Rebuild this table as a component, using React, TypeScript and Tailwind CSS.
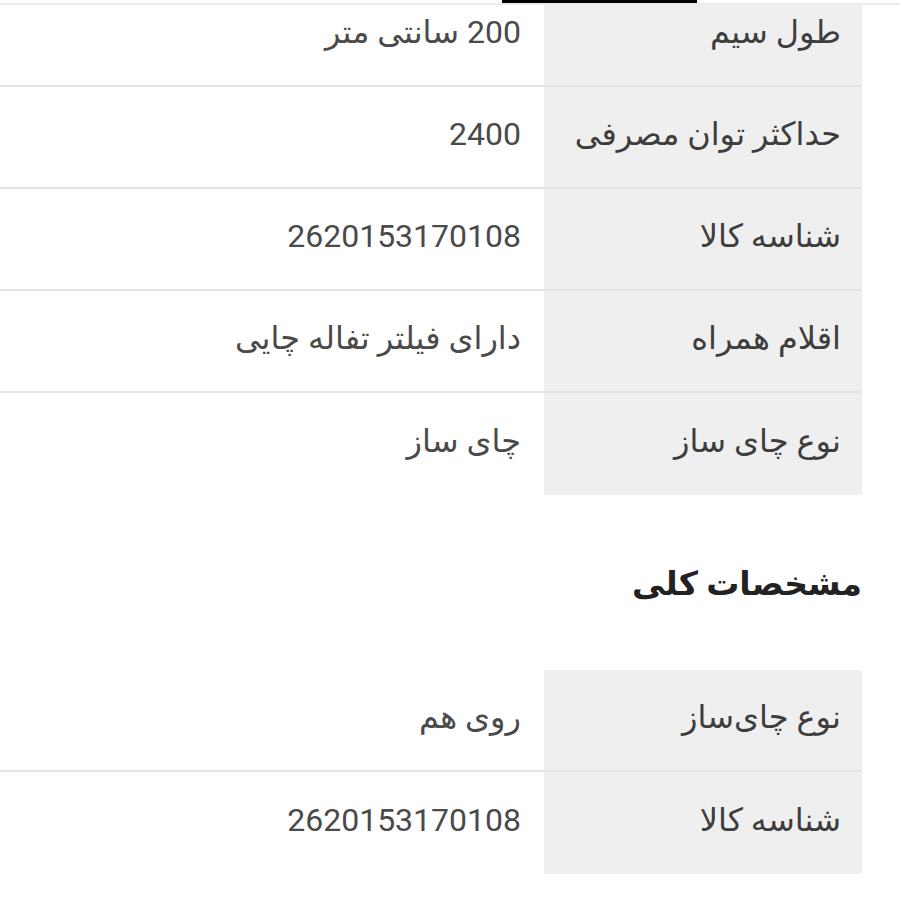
import React from 'react'

type Spec = { label: string; value: string }

const mainSpecs: Spec[] = [
  { label: 'طول سیم', value: '200 سانتی متر' },
  { label: 'حداکثر توان مصرفی', value: '2400' },
  { label: 'شناسه کالا', value: '2620153170108' },
  { label: 'اقلام همراه', value: 'دارای فیلتر تفاله چایی' },
  { label: 'نوع چای ساز', value: 'چای ساز' },
]

const generalSpecs: Spec[] = [
  { label: 'نوع چای‌ساز', value: 'روی هم' },
  { label: 'شناسه کالا', value: '2620153170108' },
]

function SpecTable({ rows }: { rows: Spec[] }) {
  return (
    <div className="flex flex-col">
      {rows.map((row, i) => (
        <div
          key={i}
          className={`flex h-[102px] ${i < rows.length - 1 ? 'border-b-2 border-[#e4e4e4]' : ''}`}
        >
          <div className="w-[318px] shrink-0 bg-[#efefef] flex items-center pr-[21px] pb-[6px] text-[32px] text-[#3d3d3d]">
            {row.label}
          </div>
          <div className="flex-1 flex items-center pr-[23px] pb-[6px] text-[32px] text-[#4a4a4a]">
            {row.value}
          </div>
        </div>
      ))}
    </div>
  )
}

export default function App() {
  return (
    <div
      dir="rtl"
      className="relative w-[900px] h-[900px] overflow-hidden bg-white"
      style={{ fontFamily: 'Roboto, "DejaVu Sans", sans-serif' }}
    >
      {/* نوار بالایی */}
      <div className="absolute top-0 left-0 right-0 h-[5px] bg-white border-b-2 border-[#ececec] z-10">
        <div className="absolute top-0 left-[502px] w-[195px] h-[3px] bg-black" />
      </div>

      <div className="mr-[38px] -mt-[15px]">
        <SpecTable rows={mainSpecs} />

        <h2 className="mt-[62px] mb-[59px] text-[33px] font-bold text-[#222] leading-[54px]">
          مشخصات کلی
        </h2>

        <SpecTable rows={generalSpecs} />
      </div>
    </div>
  )
}
